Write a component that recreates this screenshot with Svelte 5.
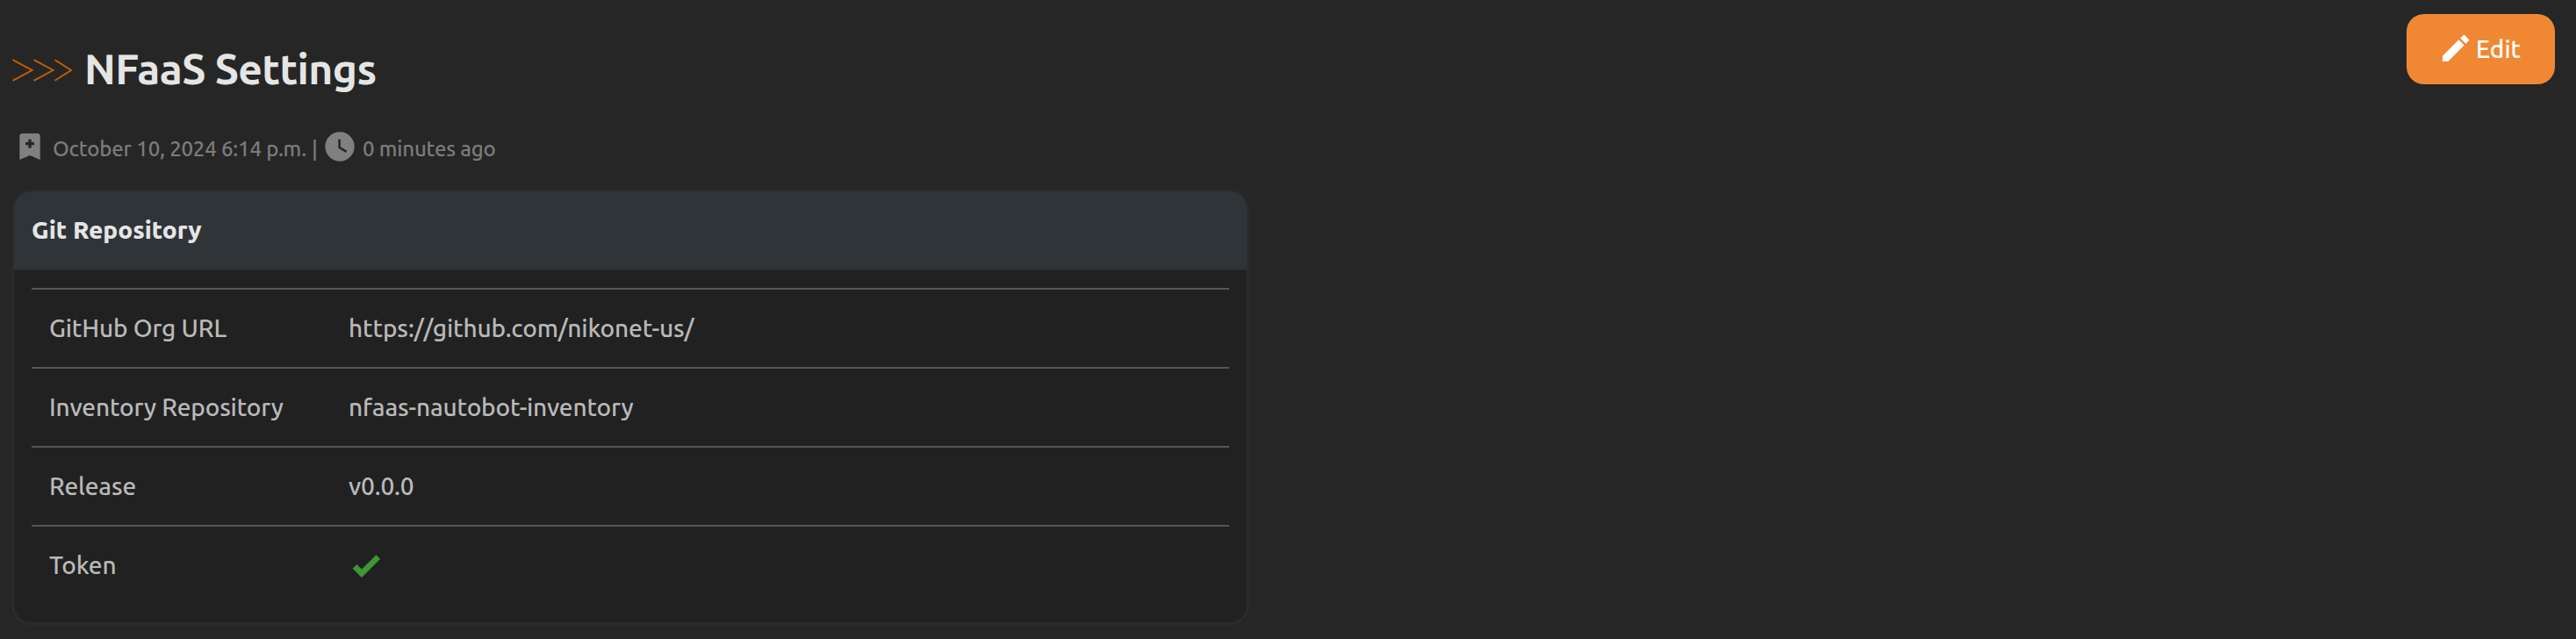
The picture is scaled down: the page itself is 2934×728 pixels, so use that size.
<script>
  const rows = [
    { label: 'GitHub Org URL', value: 'https://github.com/nikonet-us/' },
    { label: 'Inventory Repository', value: 'nfaas-nautobot-inventory' },
    { label: 'Release', value: 'v0.0.0' },
    { label: 'Token', check: true }
  ];
</script>

<main>
  <header>
    <div class="heading">
      <svg class="chevrons" width="70" height="26" viewBox="0 0 70 26" aria-hidden="true">
        <path d="M.5 1.2 22.5 13 .5 24.8M24.5 1.2 46.5 13 24.5 24.8M48.5 1.2 67 13 48.5 24.8" />
      </svg>
      <h1>NFaaS Settings</h1>
    </div>
    <button>
      <svg width="40" height="40" viewBox="0 0 24 24" aria-hidden="true"><path d="M20.71,7.04C21.1,6.65 21.1,6 20.71,5.63L18.37,3.29C18,2.9 17.35,2.9 16.96,3.29L15.12,5.12L18.87,8.87M3,17.25V21H6.75L17.81,9.93L14.06,6.18L3,17.25Z" /></svg>
      <span>Edit</span>
    </button>
  </header>

  <div class="meta">
    <svg class="bookmark" width="40" height="40" viewBox="0 0 24 24" aria-hidden="true"><path fill-rule="evenodd" d="M17,3A2,2 0 0 1 19,5V21L12,18L5,21V5A2,2 0 0 1 7,3H17M11,7V9H9V11H11V13H13V11H15V9H13V7H11Z" /></svg>
    <span class="date">October 10, 2024 6:14 p.m.</span>
    <span class="bar">|</span>
    <svg class="clock" width="40" height="40" viewBox="0 0 24 24" aria-hidden="true"><path d="M12,2A10,10 0 0,0 2,12A10,10 0 0,0 12,22A10,10 0 0,0 22,12A10,10 0 0,0 12,2M16.2,16.2L11,13V7H12.5V12.2L17,14.9L16.2,16.2Z" /></svg>
    <span class="ago">0 minutes ago</span>
  </div>

  <section>
    <h2>Git Repository</h2>
    <dl>
      {#each rows as row}
        <div class="row">
          <dt>{row.label}</dt>
          <dd>
            {#if row.check}
              <svg width="40" height="40" viewBox="0 0 24 24" aria-label="Set"><path d="M9,20.42L2.79,14.21L5.62,11.38L9,14.77L18.88,4.88L21.71,7.71L9,20.42Z" /></svg>
            {:else}
              {row.value}
            {/if}
          </dd>
        </div>
      {/each}
    </dl>
  </section>
</main>

<style>
  :global(body) { background: #262626; }
  main {
    box-sizing: border-box;
    height: 728px;
    overflow: hidden;
    padding: 16px 24px 0 14px;
    font: 500 28px/40px Ubuntu, "Noto Sans", sans-serif;
    color: #b9b9b9;
    white-space: nowrap;
  }
  header { display: flex; justify-content: space-between; align-items: flex-start; height: 128px; }
  .heading { display: flex; align-items: center; gap: 12px; height: 64px; margin-top: 30px; }
  .chevrons { fill: none; stroke: #c65f04; stroke-width: 1.9; margin-top: 3px; }
  h1 { margin: 0; font-size: 48px; line-height: 64px; font-weight: 600; letter-spacing: -0.6px; color: #e5e5e5; }
  button {
    display: flex; align-items: center; gap: 3px;
    width: 169px; height: 80px; padding: 0 0 0 36px;
    border: 0; border-radius: 20px; background: #f08833; color: #fff;
    font: inherit;
  }
  button svg { fill: #fff; margin-top: -2px; }
  .meta { display: flex; align-items: center; height: 48px; margin-bottom: 24px; color: #7b7b7b; font-size: 24px; }
  .meta svg { fill: #7f817e; flex: none; }
  .meta span { padding-top: 4px; }
  .bookmark { margin-top: -2px; }
  .date { width: 295px; margin-left: 6px; letter-spacing: -0.18px; }
  .bar { width: 12px; }
  .clock { margin-top: -2px; }
  .ago { margin-left: 6px; letter-spacing: -0.2px; }
  section {
    box-sizing: border-box; width: 1408px; height: 495px; overflow: hidden;
    border: 2px solid #2b2c2c; border-radius: 22px; background: #212121;
    box-shadow: 0 2px 2px #2b2b2b;
  }
  h2 {
    box-sizing: border-box; height: 90px; margin: 0; padding: 24px 20px 0;
    border-bottom: 2px solid #2b2d2e; background: #2f3439;
    font-size: 28px; line-height: 40px; font-weight: 800; color: #e5e5e5;
  }
  dl { margin: 20px 20px 0; }
  .row { display: grid; grid-template-columns: 341px 1fr; box-sizing: border-box; height: 90px; padding: 24px 20px 0; border-top: 2px solid #555756; letter-spacing: -0.15px; }
  .row:first-child dd { letter-spacing: -0.08px; }
  dt, dd { margin: 0; height: 40px; }
  dd svg { display: block; fill: #3e9635; }
</style>
